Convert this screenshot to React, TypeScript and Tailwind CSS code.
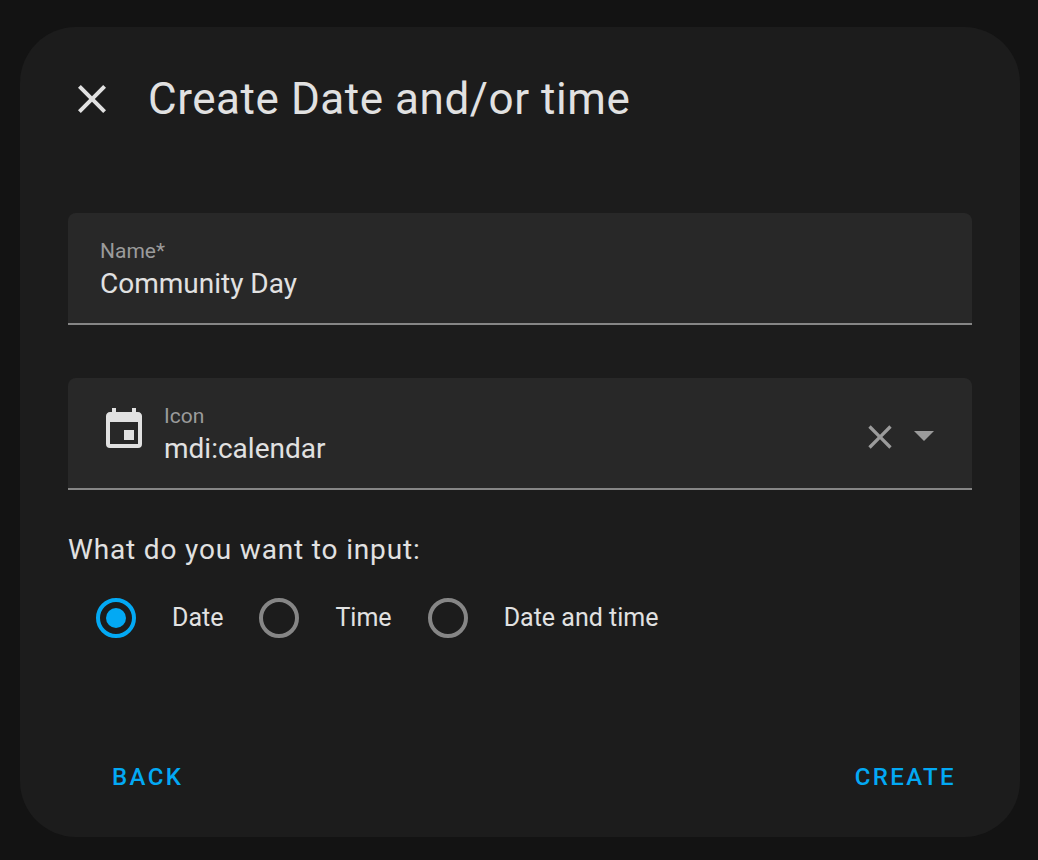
import { useState } from "react";

const CLOSE =
  "M19,6.41L17.59,5L12,10.59L6.41,5L5,6.41L10.59,12L5,17.59L6.41,19L12,13.41L17.59,19L19,17.59L13.41,12L19,6.41Z";
const CALENDAR =
  "M19,19H5V8H19M16,1V3H8V1H6V3H5C3.89,3 3,3.89 3,5V19A2,2 0 0,0 5,21H19A2,2 0 0,0 21,19V5C21,3.89 20.1,3 19,3H18V1M17,12H12V17H17V12Z";
const MENU_DOWN = "M7,10L12,15L17,10H7Z";

function Icon({ path, className }: { path: string; className: string }) {
  return (
    <svg viewBox="0 0 24 24" fill="currentColor" aria-hidden="true" className={className}>
      <path d={path} />
    </svg>
  );
}

const MODES = ["Date", "Time", "Date and time"];

export default function App() {
  const [name, setName] = useState("Community Day");
  const [icon, setIcon] = useState("mdi:calendar");
  const [mode, setMode] = useState("Date");

  return (
    <main className="flex min-h-screen items-start justify-center bg-[#131313] pt-[27px] pr-[18px] pb-[23px] pl-5 font-['Roboto',sans-serif] text-[#e1e1e1]">
      <form
        role="dialog"
        aria-labelledby="dialog-title"
        onSubmit={(e) => e.preventDefault()}
        className="flex w-full flex-col rounded-[56px] bg-[#1c1c1c] px-12 pt-12 pb-6"
      >
        <header className="flex items-center gap-8">
          <button type="button" aria-label="Close" className="size-12">
            <Icon path={CLOSE} className="size-12" />
          </button>
          <h1 id="dialog-title" className="text-[44px] leading-12 tracking-[0.0125em]">
            Create Date and/or time
          </h1>
        </header>

        <div className="mt-[90px] flex h-28 flex-col rounded-t-lg border-b-2 border-[#868686] bg-[#282828] px-8 pt-[26px]">
          <label htmlFor="name" className="text-[21px] leading-6 text-[#9b9b9b]">
            Name*
          </label>
          <input
            id="name"
            type="text"
            required
            value={name}
            onChange={(e) => setName(e.target.value)}
            className="h-[42px] w-full bg-transparent text-[28px] outline-none"
          />
        </div>

        <div className="mt-[53px] flex h-28 items-center rounded-t-lg border-b-2 border-[#868686] bg-[#282828] px-8">
          <Icon path={CALENDAR} className="mb-1.5 size-12 shrink-0" />
          <div className="ml-4 flex min-w-0 flex-1 flex-col self-stretch pt-[26px]">
            <label htmlFor="icon" className="text-[21px] leading-6 text-[#9b9b9b]">
              Icon
            </label>
            <input
              id="icon"
              type="text"
              role="combobox"
              aria-expanded="false"
              value={icon}
              onChange={(e) => setIcon(e.target.value)}
              className="h-[42px] w-full bg-transparent text-[28px] outline-none"
            />
          </div>
          <div className="mt-1 flex items-center text-[#9b9b9b]">
            <button type="button" aria-label="Clear" onClick={() => setIcon("")} className="mt-1 size-10">
              <Icon path={CLOSE} className="size-10" />
            </button>
            <button type="button" aria-label="Open icon list" className="-mr-2 size-12">
              <Icon path={MENU_DOWN} className="size-12" />
            </button>
          </div>
        </div>

        <fieldset className="mt-10">
          <legend className="text-[28px] leading-10 tracking-[0.03em]">What do you want to input:</legend>
          <div className="mt-7 flex flex-wrap gap-9 pl-7">
            {MODES.map((m) => (
              <label key={m} className="flex items-center gap-9 text-[25px] leading-10">
                <input
                  type="radio"
                  name="mode"
                  value={m}
                  checked={mode === m}
                  onChange={() => setMode(m)}
                  className="grid size-10 shrink-0 appearance-none place-items-center rounded-full border-4 border-[#868686] before:size-5 before:rounded-full checked:border-[#03a9f4] checked:before:bg-[#03a9f4]"
                />
                {m}
              </label>
            ))}
          </div>
        </fieldset>

        <footer className="mt-[103px] flex justify-between text-[24px] leading-9 font-medium text-[#03a9f4]">
          <button type="button" className="h-[72px] px-11 uppercase tracking-widest">
            Back
          </button>
          <button type="submit" className="-mr-7 h-[72px] px-11 uppercase tracking-widest">
            Create
          </button>
        </footer>
      </form>
    </main>
  );
}
